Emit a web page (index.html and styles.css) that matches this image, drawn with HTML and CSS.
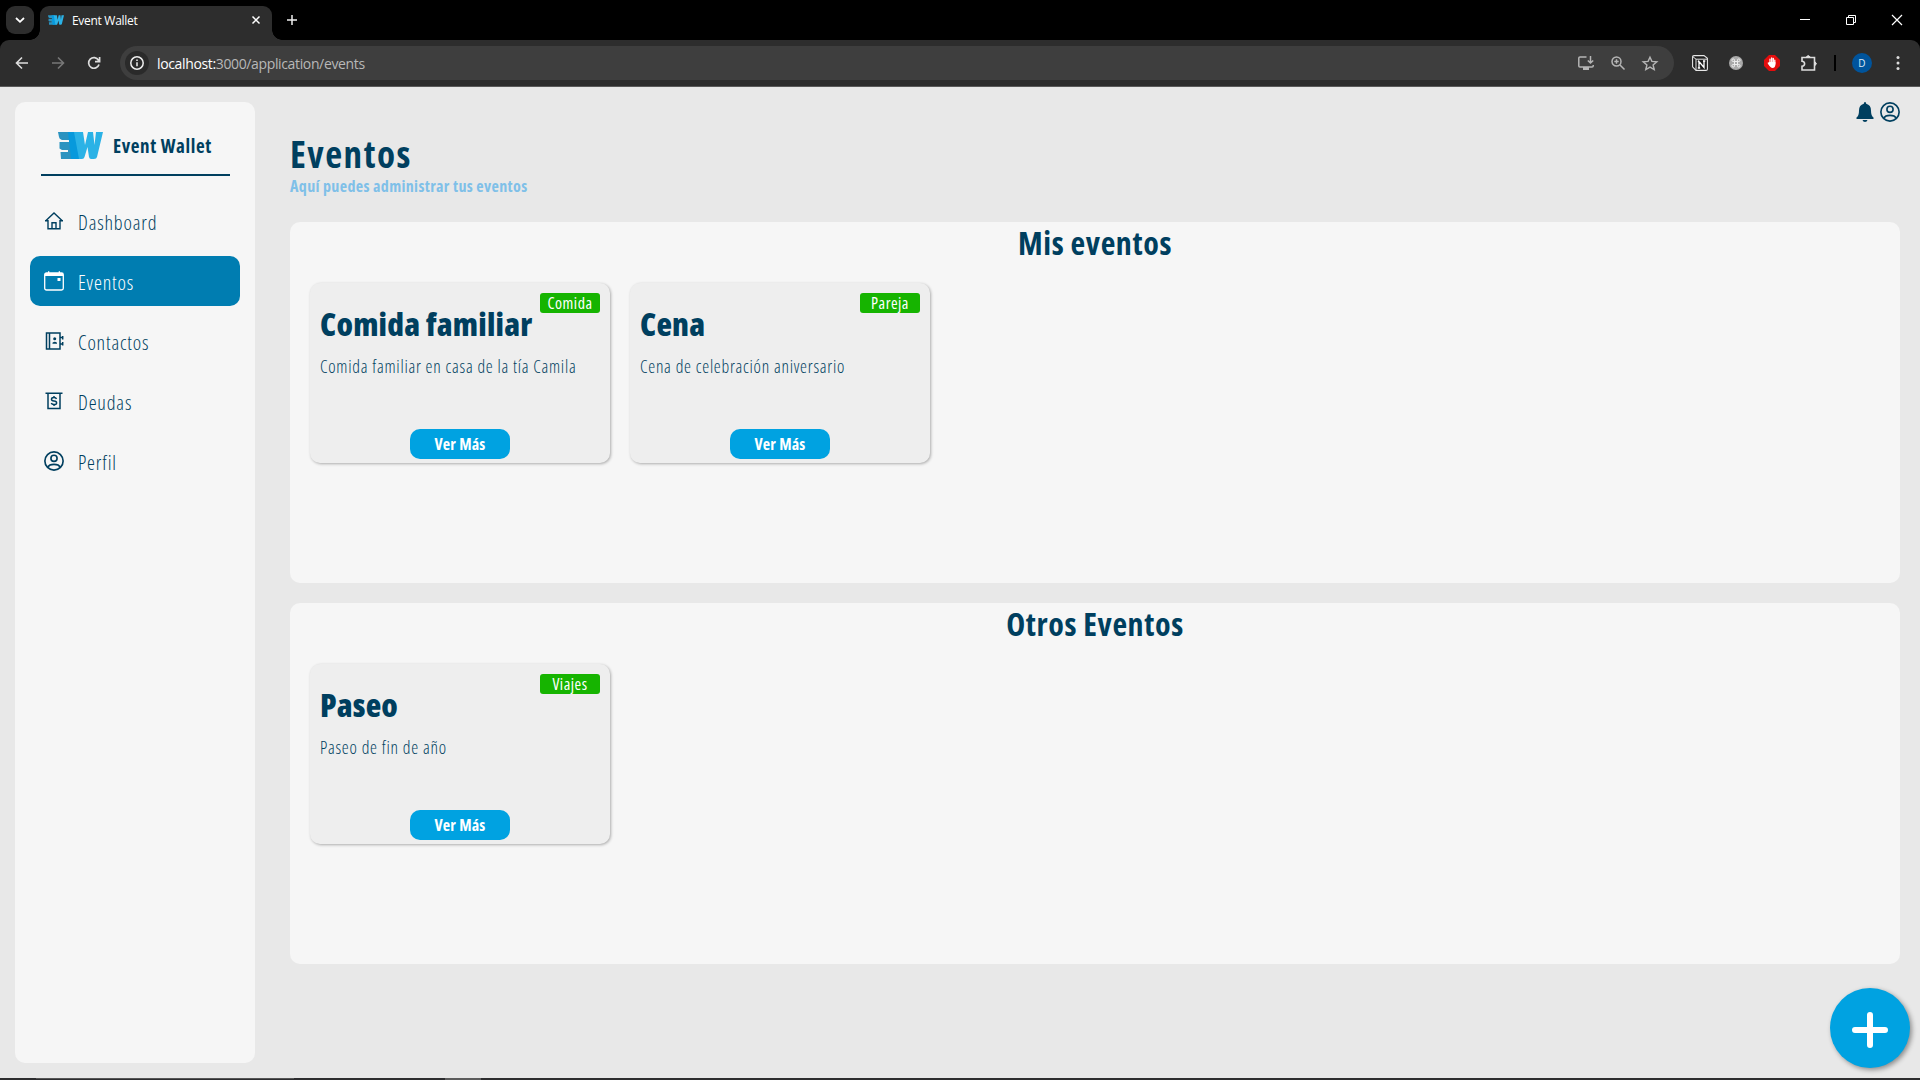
FILE: index.html
```html
<!DOCTYPE html>
<html lang="es">
<head>
<meta charset="utf-8">
<title>Event Wallet</title>
<link rel="stylesheet" href="styles.css">
</head>
<body>
<svg width="0" height="0" class="defs">
  <symbol id="logo" viewBox="0 0 45 27">
    <path fill="#2b93c0" d="M0 0H18L20 27H3L2.500 20H10V18H4L1.500 16.500V10H11V8H4Q1 7 1 5Z"/>
    <path fill="#0799dc" d="M10 0H18L24 27H13Z"/>
    <path fill="#2bb2e6" d="M16 0H25L27 13L30 0H35L36.500 13L38 0H45L39 25Q38.500 27 36 27H33Q31.500 27 31 25L29.500 15L26.500 25Q26 27 24 27H21Z"/>
  </symbol>
  <symbol id="user" viewBox="0 0 20 20">
    <g fill="none" stroke="currentColor" stroke-width="1.500"><circle cx="10" cy="10" r="8.300"/><circle cx="10" cy="7.600" r="2.800"/><path d="M4.300 15.800C6 12.200 14 12.200 15.700 15.800"/></g>
  </symbol>
</svg>

<div class="browser">
  <div class="tabstrip">
    <div class="tabsearch"><svg width="10" height="6" viewBox="0 0 10 6"><path d="M1 1L5 4.800L9 1" fill="none" stroke="#fff" stroke-width="1.800"/></svg></div>
    <div class="tab">
      <svg class="favicon" width="16" height="10"><use href="#logo"/></svg>
      <span class="tab-title">Event Wallet</span>
      <svg class="tab-close" width="8" height="8" viewBox="0 0 8 8"><path d="M.5.5L7.500 7.500M7.500.5L.5 7.500" stroke="#fff" stroke-width="1.500"/></svg>
    </div>
    <svg class="newtab" width="10" height="10" viewBox="0 0 10 10"><path d="M5 0V10M0 5H10" stroke="#eee" stroke-width="1.500"/></svg>
    <div class="winbtns">
      <svg width="10" height="10" viewBox="0 0 10 10"><path d="M0 4.500H10" stroke="#fff"/></svg>
      <svg width="10" height="10" viewBox="0 0 10 10" fill="none" stroke="#fff"><path d="M.5 2.500H7.500V9.500H.5ZM2.500 2.500V.5H9.500V7.500H7.500"/></svg>
      <svg width="10" height="10" viewBox="0 0 10 10"><path d="M0 0L10 10M10 0L0 10" stroke="#fff" stroke-width="1.200"/></svg>
    </div>
  </div>
  <div class="toolbar">
    <div class="navbtns">
      <svg width="14" height="14" viewBox="0 0 14 14" fill="none" stroke="#ddd" stroke-width="1.600"><path d="M13 7H2M7 1.500L1.500 7L7 12.500"/></svg>
      <svg width="14" height="14" viewBox="0 0 14 14" fill="none" stroke="#777" stroke-width="1.600"><path d="M1 7H12M7 1.500L12.500 7L7 12.500"/></svg>
      <svg width="14" height="14" viewBox="0 0 14 14" fill="none" stroke="#ddd" stroke-width="1.700"><path d="M12 8.500A5.300 5.300 0 1 1 11.500 4.200L12.500 5.500M12.600 1V5.600H8"/></svg>
    </div>
    <div class="urlbar">
      <span class="info"><svg width="14" height="14" viewBox="0 0 14 14" fill="none" stroke="#eee" stroke-width="1.500"><circle cx="7" cy="7" r="6.200"/><path d="M7 6.200V10.300M7 3.500V5"/></svg></span>
      <span class="url"><b>localhost:</b>3000/application/events</span>
      <div class="urlicons">
        <svg width="16" height="14" viewBox="0 0 16 14" fill="none" stroke="#b5b5b5" stroke-width="1.500"><path d="M8.500 1H2Q.8 1 .8 2V10Q.8 11 2 11H14Q15.200 11 15.200 10V9"/><path d="M12.500 0V6M9.800 4.500L12.500 7L15.200 4.500"/><path d="M5 12.500H11" stroke-width="3"/></svg>
        <svg width="14" height="14" viewBox="0 0 14 14" fill="none" stroke="#b5b5b5" stroke-width="1.500"><circle cx="5.500" cy="5.500" r="4.500"/><path d="M9 9L13.500 13.500M5.500 3.300V7.700M3.300 5.500H7.700"/></svg>
        <svg width="16" height="15" viewBox="0 0 16 15" fill="none" stroke="#b5b5b5" stroke-width="1.400"><path d="M8 1.200L9.900 5.400L14.800 5.800L11.100 8.900L12.200 13.600L8 11.100L3.800 13.600L4.900 8.900L1.200 5.800L6.100 5.400Z"/></svg>
      </div>
    </div>
    <div class="extensions">
      <svg width="16" height="16" viewBox="0 0 16 16"><path d="M2 .6H12L15.400 3.300V14Q15.400 15.400 14 15.400H4L.6 11.800V2Q.6.6 2 .6Z" fill="#1c1c1c" stroke="#e6e6e6" stroke-width="1.100"/><path d="M1 1.800L4 4.200H15M4 4.200V15" fill="none" stroke="#e6e6e6"/><path d="M7 13V6.500L12 12.500V6M5.800 6.500H7.500M11 6H13.300M5.800 13H8.200" fill="none" stroke="#fff" stroke-width="1.300"/></svg>
      <svg class="ext-cmd" width="14" height="14" viewBox="0 0 14 14"><circle cx="7" cy="7" r="7" fill="#a9a9a9"/><path d="M5.500 5.500H8.500V8.500H5.500ZM5.500 5.500H4.200A1.300 1.300 0 1 1 5.500 4.200ZM8.500 5.500V4.200A1.300 1.300 0 1 1 9.800 5.500ZM5.500 8.500V9.800A1.300 1.300 0 1 1 4.200 8.500ZM8.500 8.500H9.800A1.300 1.300 0 1 1 8.500 9.800Z" fill="none" stroke="#eee"/></svg>
      <svg class="ext-block" width="16" height="16" viewBox="0 0 16 16"><path d="M5 0H11L16 5V11L11 16H5L0 11V5Z" fill="#e40d0d"/><path d="M6 8V4.200M7.700 7V3M9.300 7V3.500M4.300 8L6 10M10.800 9V5.200" stroke="#fff" stroke-width="1.300" stroke-linecap="round"/><path d="M5.400 7H11.400V10Q11 13 8.500 13Q6.500 13 4.300 9Z" fill="#fff"/></svg>
      <svg class="ext-puzzle" width="17" height="16" viewBox="0 0 17 16" fill="none" stroke="#ddd" stroke-width="1.600"><path d="M1 2.500H13.500V15H1V11.300Q3.600 11 3.600 8.800Q3.600 6.500 1 6.300Z"/><path d="M5.300 2Q7.200-.8 9.200 2ZM14 6.800Q16.800 8.600 14 10.500Z" fill="#ddd" stroke-width="1"/></svg>
      <i class="divider"></i>
      <span class="avatar">D</span>
      <svg width="4" height="14" viewBox="0 0 4 14" fill="#ddd"><circle cx="2" cy="1.500" r="1.500"/><circle cx="2" cy="7" r="1.500"/><circle cx="2" cy="12.500" r="1.500"/></svg>
    </div>
  </div>
</div>

<div class="app">
  <aside class="sidebar">
    <div class="brand"><svg width="45" height="27"><use href="#logo"/></svg><span class="brand-name">Event Wallet</span></div>
    <nav>
      <a class="item"><svg width="20" height="20" viewBox="0 0 20 20" fill="none" stroke="currentColor" stroke-width="1.400"><path d="M1.500 10L10 2L18.500 10M1 9.800H4V17.700H16V9.800H19M8 17.500V11.700H12V17.500"/></svg><span>Dashboard</span></a>
      <a class="item active"><svg width="20" height="20" viewBox="0 0 20 20"><rect x=".7" y="2" width="18.600" height="17" rx="1.800" fill="none" stroke="currentColor" stroke-width="1.300"/><path d="M1 2H19V5H1ZM4 .3H5.300V3H4ZM14.700.3H16V3H14.700ZM13.500 7H16.500V10H13.500Z" fill="currentColor"/></svg><span>Eventos</span></a>
      <a class="item"><svg width="20" height="20" viewBox="0 0 20 20" fill="none" stroke="currentColor" stroke-width="1.500"><path d="M2.500 2H16V18H2.500ZM5.500 2V18M18.700 5V8.500M18.700 11V14.500M16 6.500H18.500M16 13H18.500"/><circle cx="10.700" cy="7.800" r="1.500" fill="currentColor" stroke="none"/><path d="M8.500 12.800V11.800Q10.700 9.500 13 11.800V12.800Z" fill="currentColor" stroke="none"/></svg><span>Contactos</span></a>
      <a class="item"><svg width="20" height="20" viewBox="0 0 20 20" fill="none" stroke="currentColor" stroke-width="1.500"><path d="M1.500 2.200H18.500M4 2.500V17.500H16V2.500"/><path d="M12.500 8Q12 6.500 10 6.500Q7.500 6.500 7.500 8.200Q7.500 9.800 10 10Q12.600 10.200 12.600 11.900Q12.600 13.500 10 13.500Q7.800 13.500 7.300 12M10 5V6.500M10 13.500V15"/></svg><span>Deudas</span></a>
      <a class="item"><svg width="22" height="22"><use href="#user"/></svg><span>Perfil</span></a>
    </nav>
  </aside>

  <main class="content">
    <div class="topicons">
      <svg width="18" height="20" viewBox="0 0 18 20" fill="currentColor"><path d="M9 0Q10.200 0 10.200 1.700Q15 3 15 8.500Q15 14 17.500 15.500V17H.5V15.500Q3 14 3 8.500Q3 3 7.800 1.700Q7.800 0 9 0ZM6.500 18H11.500Q11 20 9 20Q7 20 6.500 18Z"/></svg>
      <svg width="22" height="22"><use href="#user"/></svg>
    </div>
    <h1>Eventos</h1>
    <p class="subtitle">Aquí puedes administrar tus eventos</p>

    <section class="panel">
      <h2>Mis eventos</h2>
      <div class="cards">
        <article class="card"><span class="badge">Comida</span><h3>Comida familiar</h3><p>Comida familiar en casa de la tía Camila</p><button>Ver Más</button></article>
        <article class="card"><span class="badge">Pareja</span><h3>Cena</h3><p>Cena de celebración aniversario</p><button>Ver Más</button></article>
      </div>
    </section>
    <section class="panel">
      <h2>Otros Eventos</h2>
      <div class="cards">
        <article class="card"><span class="badge">Viajes</span><h3>Paseo</h3><p>Paseo de fin de año</p><button>Ver Más</button></article>
      </div>
    </section>
  </main>
  <div class="fab"><svg width="38" height="38" viewBox="0 0 38 38"><path d="M19 4V34M4 19H34" stroke="#fff" stroke-width="6" stroke-linecap="round"/></svg></div>
</div>
<div class="taskbar"><i class="task-field"></i><i class="task-app"></i></div>
</body>
</html>
```
FILE: styles.css
```css
* { box-sizing: border-box; margin: 0; padding: 0; }
body { width: 1920px; height: 1080px; overflow: hidden; display: flex; flex-direction: column; background: #e8e8e8; color: #003f5f; font-family: "Open Sans", "Noto Sans", sans-serif; font-stretch: 75%; }
svg { display: block; flex: none; overflow: visible; }
.defs { position: absolute; }

.browser { height: 87px; flex: none; background: #000; font-stretch: 100%; }
.tabstrip { height: 40px; display: flex; align-items: center; padding-left: 6px; }
.tabsearch { width: 28px; height: 28px; border-radius: 9px; background: #2d2d2d; display: flex; align-items: center; justify-content: center; }
.tab { position: relative; width: 232px; height: 34px; margin: 6px 0 0 6px; padding: 0 12px 6px 8px; display: flex; align-items: center; background: #2d2d2d; border-radius: 9px 9px 0 0; }
.tab::before, .tab::after { content: ""; position: absolute; bottom: 0; width: 10px; height: 10px; }
.tab::before { left: -10px; background: radial-gradient(circle at 0 0, transparent 9.5px, #2d2d2d 10px); }
.tab::after { right: -10px; background: radial-gradient(circle at 100% 0, transparent 9.5px, #2d2d2d 10px); }
.tab-title { flex: 1; margin-left: 8px; color: #fff; font-size: 12px; letter-spacing: -.3px; }
.newtab { margin-left: 15px; }
.winbtns { display: flex; gap: 36px; margin-left: auto; margin-right: 18px; }
.toolbar { height: 47px; display: flex; align-items: center; background: #2d2d2d; border-bottom: 1px solid #5a5a5a; border-radius: 9px 9px 0 0; }
.navbtns { display: flex; gap: 22px; margin-left: 15px; }
.urlbar { width: 1554px; height: 34px; margin-left: 19px; border-radius: 17px; background: #3e3e3e; display: flex; align-items: center; }
.info { width: 24px; height: 24px; margin-left: 5px; border-radius: 50%; background: #2a2a2a; display: flex; align-items: center; justify-content: center; }
.url { margin-left: 8px; color: #b8b8b8; font-size: 14px; letter-spacing: -.36px; }
.url b { color: #fff; font-weight: 400; }
.urlicons { display: flex; align-items: center; gap: 17px; margin-left: auto; margin-right: 16px; }
.extensions { flex: 1; display: flex; align-items: center; margin-left: 18px; }
.ext-cmd, .ext-block, .ext-puzzle { margin-left: 21px; }
.divider { width: 2px; height: 16px; margin: 0 16px; background: #000; }
.avatar { width: 20px; height: 20px; margin-right: 24px; border-radius: 50%; background: #00549c; color: #dceaf8; font-size: 10px; line-height: 20px; text-align: center; }

.app { position: relative; flex: 1; display: flex; padding: 15px 20px 15px 15px; }
.sidebar { width: 240px; height: 961px; padding: 26px 15px 0; border-radius: 10px; background: #f6f6f6; }
.brand { width: 189px; height: 48px; margin: 0 0 20px 11px; padding: 4px 0 0 17px; display: flex; border-bottom: 2px solid #003f5f; }
.brand-name { margin-left: 10px; font-size: 19px; line-height: 28px; font-weight: 700; letter-spacing: .6px; white-space: nowrap; }
nav { display: flex; flex-direction: column; gap: 10px; }
.item { height: 50px; padding-left: 14px; display: grid; grid-template-columns: 20px 1fr; gap: 14px; align-items: center; justify-items: start; border-radius: 10px; font-size: 20px; line-height: 46px; font-weight: 300; letter-spacing: .85px; }
.item span { padding-top: 4px; }
.item svg { justify-self: center; margin-top: -1px; }
.item.active { background: #007db1; color: #fff; }

.content { flex: 1; margin-left: 35px; }
.topicons { display: flex; gap: 5px; align-items: center; justify-content: flex-end; height: 20px; }
.topicons svg:last-child { margin-right: -1px; }
h1 { margin-top: 7px; font-size: 37px; line-height: 50px; font-weight: 700; letter-spacing: 1.5px; }
.subtitle { height: 16px; margin: -3px 0 30px; font-size: 16px; line-height: 20px; font-weight: 700; letter-spacing: .36px; color: #7fc0e8; }
.panel { height: 361px; margin-bottom: 20px; border-radius: 10px; background: #f6f6f6; }
h2 { height: 61px; font-size: 32px; line-height: 42px; font-weight: 700; letter-spacing: .6px; text-align: center; }
.cards { display: flex; gap: 20px; padding-left: 20px; }
.card { position: relative; width: 300px; height: 180px; padding: 18px 10px 0; border-radius: 10px; background: #eee; box-shadow: 1px 1px 3px rgba(0,0,0,.3); }
.badge { position: absolute; right: 10px; top: 10px; width: 60px; height: 20px; border-radius: 3px; background: #16b400; color: #fff; font-size: 16px; line-height: 21px; letter-spacing: .5px; text-align: center; }
h3 { font-size: 32px; line-height: 46px; font-weight: 800; letter-spacing: .2px; white-space: nowrap; }
.card p { margin-top: 7px; font-size: 17.5px; line-height: 24px; font-weight: 300; letter-spacing: .76px; white-space: nowrap; }
.card button { position: absolute; left: 100px; bottom: 4px; width: 100px; height: 30px; border: 0; border-radius: 10px; background: #00a2e1; color: #fff; font: 700 16px/30px "Open Sans", sans-serif; font-stretch: 75%; letter-spacing: .2px; }
.fab { position: absolute; left: 1830px; top: 901px; width: 80px; height: 80px; border-radius: 50%; background: #00a2e1; box-shadow: 2px 2px 5px rgba(0,0,0,.4); display: flex; align-items: center; justify-content: center; }
.fab svg { margin-top: 3px; }
.taskbar { height: 2px; flex: none; display: flex; background: #2d2d2f; }
.task-field { width: 258px; height: 2px; margin-left: 36px; border-top: 1px solid #555; }
.task-app { width: 36px; margin-left: 151px; background: #5c5c5c; }
```
